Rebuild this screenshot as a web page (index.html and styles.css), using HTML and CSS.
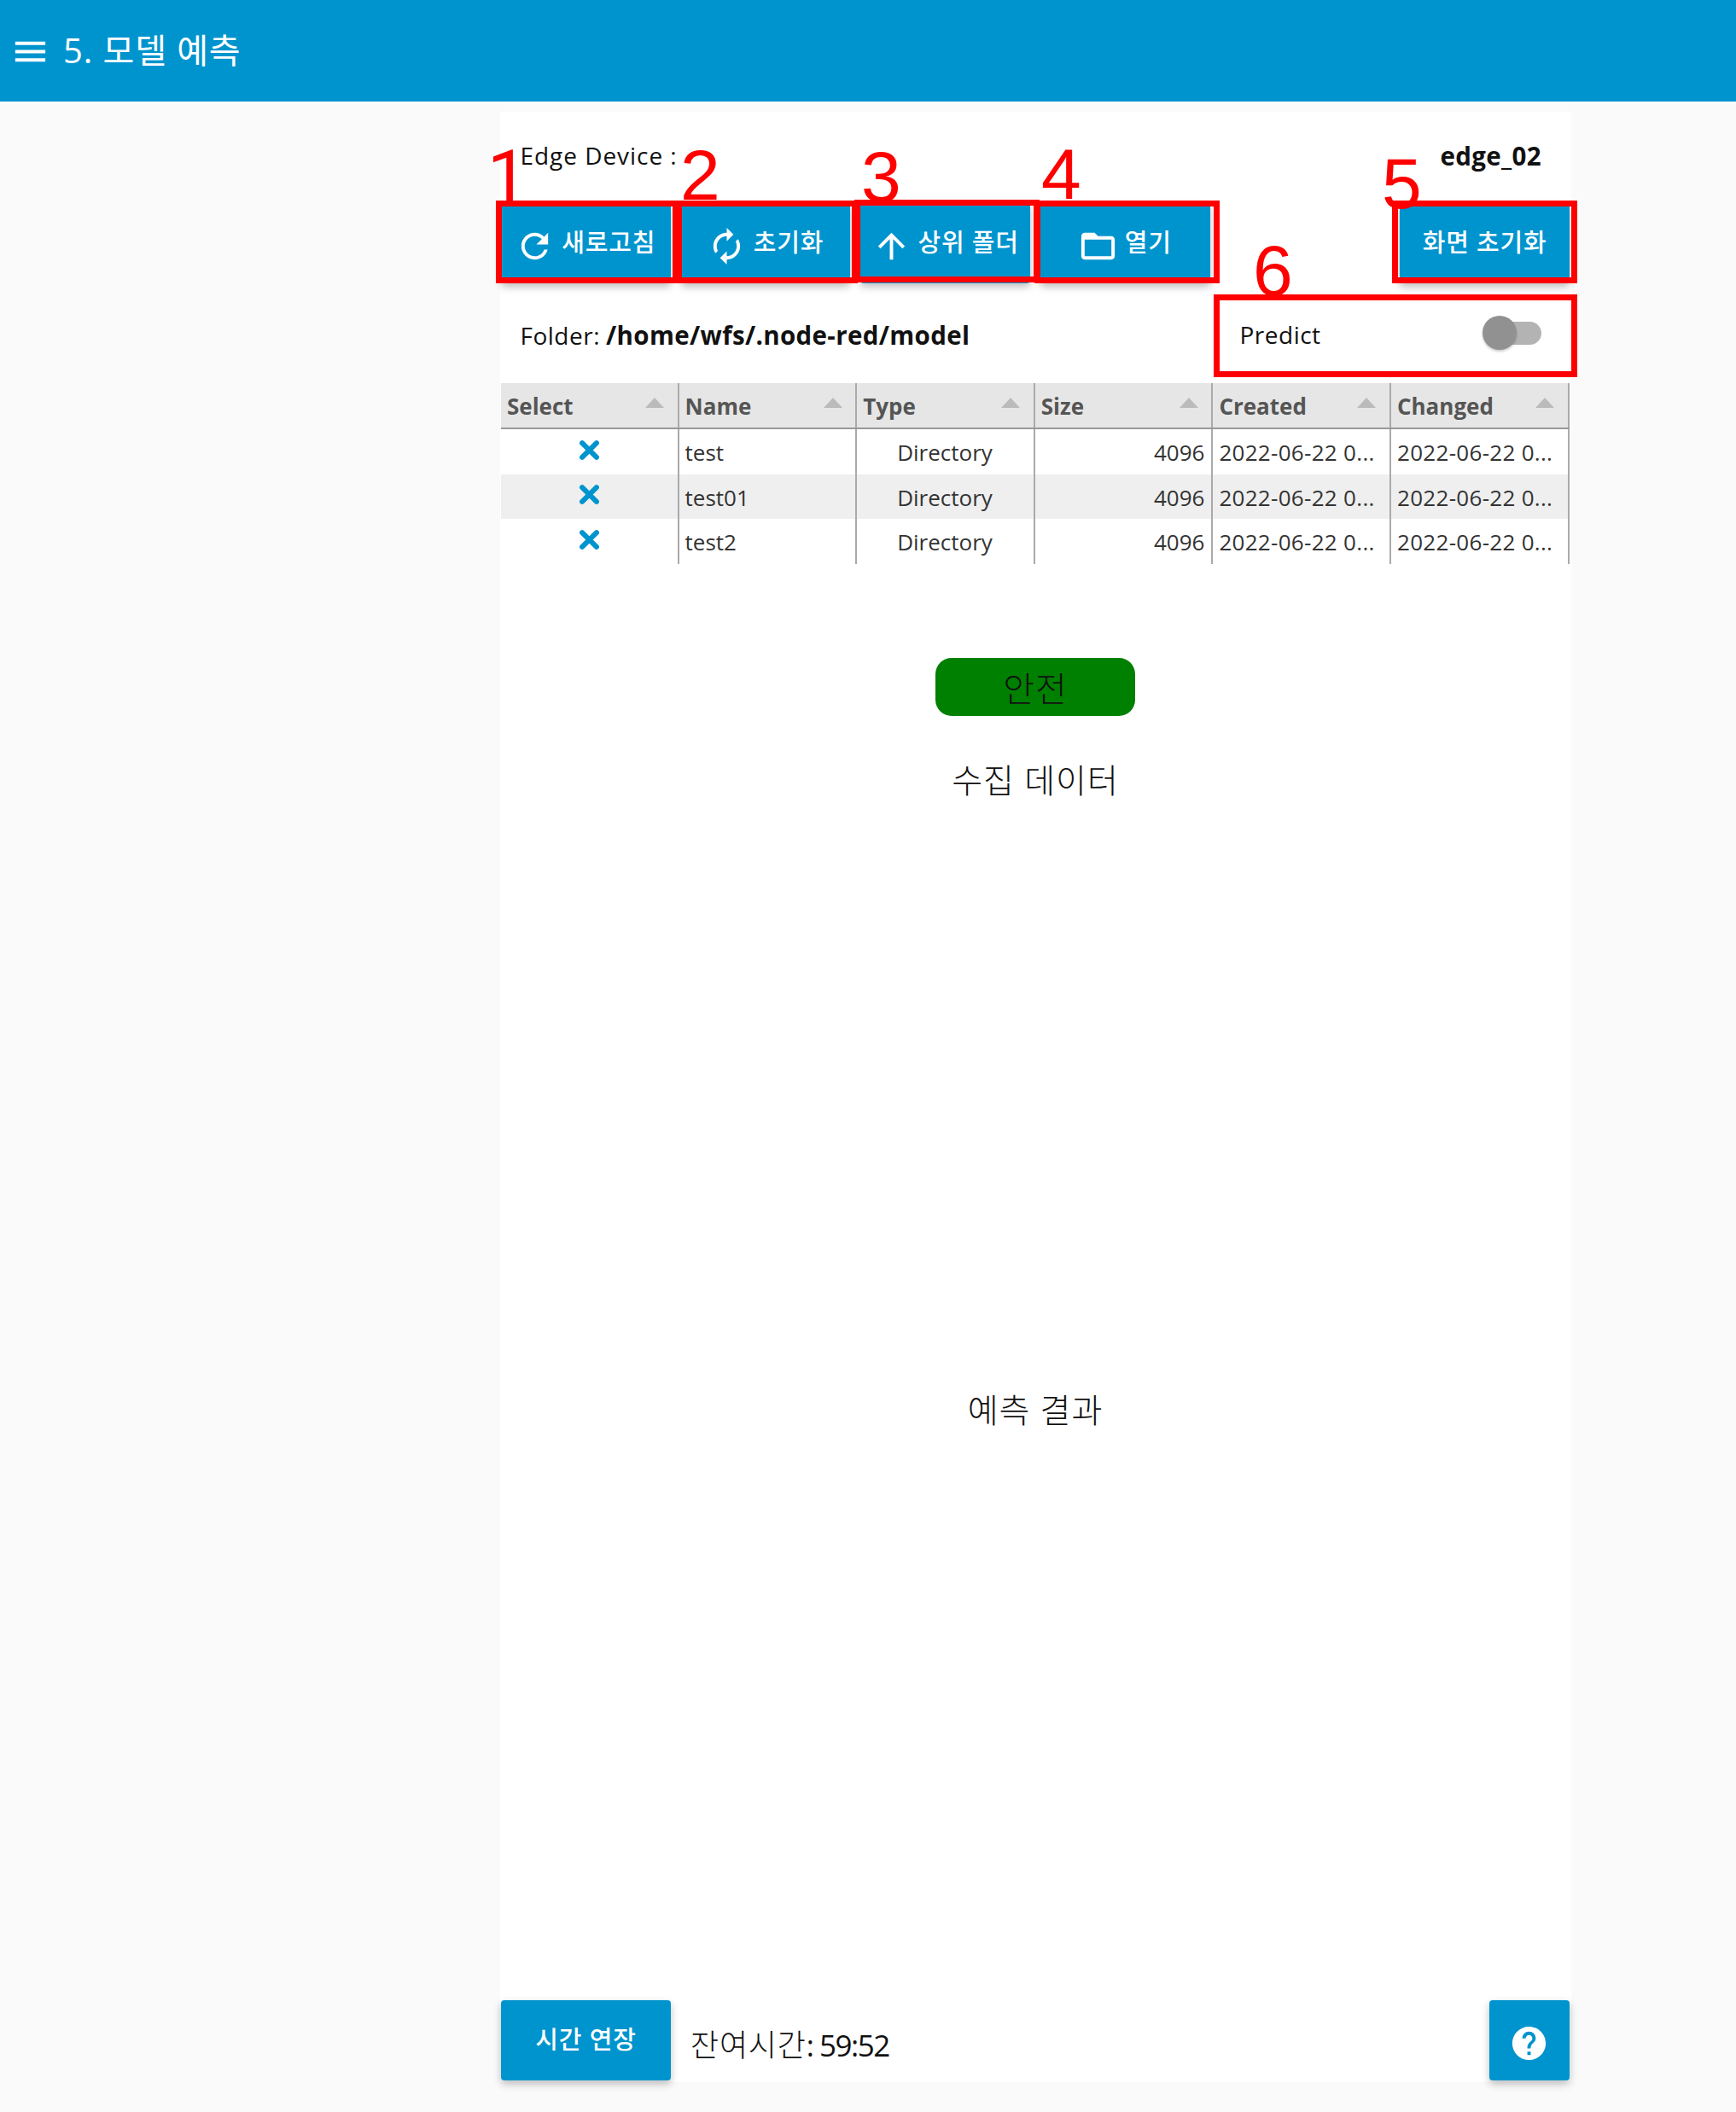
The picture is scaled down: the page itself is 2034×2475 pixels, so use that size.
FILE: index.html
```html
<!DOCTYPE html>
<html lang="ko">
<head>
<meta charset="utf-8">
<title>모델 예측</title>
<link rel="stylesheet" href="styles.css">
</head>
<body>
<header class="toolbar">
  <svg class="menu-icon" viewBox="0 0 24 24"><path d="M3 18h18v-2H3v2zm0-5h18v-2H3v2zm0-7v2h18V6H3z"/></svg>
  <h1 class="title">5. 모델 예측</h1>
</header>
<main class="panel">
  <div class="row device-row"><span class="edge">Edge Device :</span><b class="edge-name">edge_02</b></div>
  <div class="buttons">
    <button class="btn"><svg class="icon" viewBox="0 0 24 24"><path d="M17.65 6.35C16.2 4.9 14.21 4 12 4c-4.42 0-7.99 3.58-7.99 8s3.57 8 7.99 8c3.73 0 6.84-2.55 7.73-6h-2.08c-.82 2.33-3.04 4-5.65 4-3.31 0-6-2.69-6-6s2.69-6 6-6c1.66 0 3.14.69 4.22 1.78L13 11h7V4l-2.35 2.35z"/></svg><span>새로고침</span></button>
    <button class="btn"><svg class="icon" viewBox="0 0 24 24"><path d="M12 6v3l4-4-4-4v3c-4.42 0-8 3.58-8 8 0 1.57.46 3.03 1.24 4.26L6.7 14.8c-.45-.83-.7-1.79-.7-2.8 0-3.31 2.69-6 6-6zm6.76 1.74L17.3 9.2c.44.84.7 1.79.7 2.8 0 3.31-2.69 6-6 6v-3l-4 4 4 4v-3c4.42 0 8-3.58 8-8 0-1.57-.46-3.03-1.24-4.26z"/></svg><span>초기화</span></button>
    <button class="btn"><svg class="icon" viewBox="0 0 24 24"><path d="M4 12l1.41 1.41L11 7.83V20h2V7.83l5.58 5.59L20 12l-8-8-8 8z"/></svg><span>상위 폴더</span></button>
    <button class="btn"><svg class="icon" viewBox="0 0 24 24"><path d="M20 6h-8l-2-2H4c-1.1 0-1.99.9-1.99 2L2 18c0 1.1.9 2 2 2h16c1.1 0 2-.9 2-2V8c0-1.1-.9-2-2-2zm0 12H4V8h16v10z"/></svg><span>열기</span></button>
    <button class="btn reset"><span>화면 초기화</span></button>
  </div>
  <div class="row folder-row">
    <div class="folder"><span>Folder:</span><b class="path">/home/wfs/.node-red/model</b></div>
    <div class="predict"><span>Predict</span><div class="switch"><div class="thumb"></div></div></div>
  </div>
  <div class="table">
    <div class="tr head">
      <div class="td"><span>Select</span><i class="sort"></i></div>
      <div class="td"><span>Name</span><i class="sort"></i></div>
      <div class="td"><span>Type</span><i class="sort"></i></div>
      <div class="td"><span>Size</span><i class="sort"></i></div>
      <div class="td"><span>Created</span><i class="sort"></i></div>
      <div class="td"><span>Changed</span><i class="sort"></i></div>
    </div>
    <div class="tr">
      <div class="td center"><svg class="cross" viewBox="0 0 24 24"><path d="M4.5 4.5l15 15M19.5 4.5l-15 15"/></svg></div>
      <div class="td">test</div><div class="td center">Directory</div><div class="td end">4096</div>
      <div class="td date">2022-06-22 0...</div><div class="td date">2022-06-22 0...</div>
    </div>
    <div class="tr even">
      <div class="td center"><svg class="cross" viewBox="0 0 24 24"><path d="M4.5 4.5l15 15M19.5 4.5l-15 15"/></svg></div>
      <div class="td">test01</div><div class="td center">Directory</div><div class="td end">4096</div>
      <div class="td date">2022-06-22 0...</div><div class="td date">2022-06-22 0...</div>
    </div>
    <div class="tr">
      <div class="td center"><svg class="cross" viewBox="0 0 24 24"><path d="M4.5 4.5l15 15M19.5 4.5l-15 15"/></svg></div>
      <div class="td">test2</div><div class="td center">Directory</div><div class="td end">4096</div>
      <div class="td date">2022-06-22 0...</div><div class="td date">2022-06-22 0...</div>
    </div>
  </div>
  <div class="status">안전</div>
  <h2 class="heading collected">수집 데이터</h2>
  <h2 class="heading result">예측 결과</h2>
  <footer class="footer">
    <button class="btn extend"><span>시간 연장</span></button>
    <span class="remaining">잔여시간<span class="clock">: 59:52</span></span>
    <button class="btn help"><svg class="icon" viewBox="0 0 24 24"><path d="M12 2C6.48 2 2 6.48 2 12s4.48 10 10 10 10-4.48 10-10S17.52 2 12 2zm1 17h-2v-2h2v2zm2.07-7.75l-.9.92C13.45 12.9 13 13.5 13 15h-2v-.5c0-1.1.45-2.1 1.17-2.83l1.24-1.26c.37-.36.59-.86.59-1.41 0-1.1-.9-2-2-2s-2 .9-2 2H8c0-2.21 1.79-4 4-4s4 1.79 4 4c0 .88-.36 1.68-.93 2.25z"/></svg></button>
  </footer>
</main>
<div class="mark m1"></div><div class="mark m2"></div><div class="mark m3"></div><div class="mark m4"></div><div class="mark m5"></div><div class="mark m6"></div>
<span class="num n1">1</span><span class="num n2">2</span><span class="num n3">3</span><span class="num n4">4</span><span class="num n5">5</span><span class="num n6">6</span>
</body>
</html>
```
FILE: styles.css
```css
* { box-sizing: border-box; }
body {
  margin: 0;
  height: 2475px;
  position: relative;
  background: #fafafa;
  color: #111;
  font-family: "Open Sans", "Noto Sans CJK KR", sans-serif;
  font-size: 28px;
  overflow: hidden;
}
.toolbar {
  height: 121px;
  padding-left: 12px;
  display: flex;
  align-items: center;
  background: #0094ce;
  border-bottom: 2px solid #fff;
  color: #fff;
}
.menu-icon { width: 47px; height: 47px; fill: #fff; margin-top: 2px; }
.title { margin: -2px 0 0 15px; font-size: 40px; font-weight: 400; line-height: 116px; letter-spacing: .9px; }
.panel {
  width: 1255px;
  height: 2309px;
  margin: 10px 0 0 585.5px;
  padding: 0 1.5px;
  background: #fff;
  display: flex;
  flex-direction: column;
}
.row { display: flex; align-items: center; letter-spacing: .5px; }
.device-row { height: 102px; padding: 0 33px 0 22.5px; justify-content: space-between; }
.edge { letter-spacing: .95px; }
.row b { font-size: 29.5px; letter-spacing: .35px; }
.buttons { margin-top: 5px; display: grid; grid-template-columns: repeat(6, 1fr); gap: 12px; }
.btn {
  height: 94px;
  padding: 0;
  border: 0;
  border-radius: 4px;
  background: #0094ce;
  color: #fff;
  display: flex;
  align-items: center;
  justify-content: center;
  gap: 8px;
  font: 500 29px/40px "Open Sans", "Noto Sans CJK KR", sans-serif;
  letter-spacing: .8px;
  box-shadow: 0 4px 10px rgba(0, 0, 0, .26);
}
.btn span { margin-bottom: 3px; }
.icon { width: 47px; height: 47px; fill: #fff; margin: 6px 0 0 -1px; }
.reset { grid-column: 6; }
.folder-row { margin-top: 12.5px; height: 95px; }
.folder { width: 843px; padding-left: 22.5px; display: flex; align-items: baseline; gap: 7px; }
.predict { flex: 1; padding: 0 33px 0 22.5px; display: flex; align-items: center; justify-content: space-between; }
.switch { width: 66px; height: 27px; border-radius: 14px; background: #b3b3b3; margin-top: -4px; }
.thumb { width: 40px; height: 40px; margin: -6.5px 0 0 -3px; border-radius: 50%; background: #919191; box-shadow: 0 2px 3px rgba(0, 0, 0, .2); }
.table { margin-top: 9px; color: #333; font-size: 26px; }
.tr { display: grid; grid-template-columns: repeat(6, 208.6px); height: 52.6px; }
.td { display: flex; align-items: center; padding: 1.5px 8px 0 7px; border-right: 2px solid #aaa; white-space: nowrap; }
.date { letter-spacing: .3px; }
.head { height: 54.5px; background: #e6e6e6; border-bottom: 2px solid #999; color: #555; font-weight: 700; }
.head .td { justify-content: space-between; padding-right: 15.5px; }
.sort { border: 11.5px solid transparent; border-top: 0; border-bottom: 12px solid #bbb; margin-top: -8px; }
.even { background: #efefef; }
.center { justify-content: center; }
.end { justify-content: flex-end; }
.cross { width: 27px; height: 27px; margin: -6px 0 0 1px; fill: none; stroke: #0094ce; stroke-width: 5.3; stroke-linecap: round; }
.status {
  width: 234px;
  height: 68px;
  margin: 110px auto 0;
  border-radius: 19px;
  background: #008000;
  text-align: center;
  font-size: 40px;
  font-weight: 300;
  line-height: 72px;
  letter-spacing: 1px;
}
.heading { margin: 0; text-align: center; font-size: 39px; font-weight: 300; line-height: 60px; letter-spacing: 1px; }
.collected { margin-top: 45px; }
.result { margin-top: 678px; }
.footer { margin-top: auto; margin-bottom: 2px; display: flex; align-items: center; }
.extend { width: 199px; }
.remaining { margin: 6px 0 0 23px; font-size: 36px; font-weight: 300; letter-spacing: .8px; }
.clock { font-size: 35px; font-weight: 400; letter-spacing: -1.5px; }
.help { width: 94px; margin-left: auto; }
.mark { position: absolute; top: 235px; height: 97px; border: 7px solid #f00; }
.m1 { left: 581px; width: 214px; }
.m2 { left: 792px; width: 213px; }
.m3 { left: 1001px; width: 217px; top: 234px; }
.m4 { left: 1212px; width: 217px; }
.m5 { left: 1631px; width: 217px; }
.m6 { left: 1422px; width: 426px; top: 345px; }
.num { position: absolute; color: #f00; font: 84px/84px "Liberation Sans", Arial, sans-serif; }
.n1 { left: 571px; top: 165px; font-family: Roboto, sans-serif; }
.n2 { left: 797px; top: 163px; }
.n3 { left: 1009px; top: 165px; }
.n4 { left: 1220px; top: 162px; }
.n5 { left: 1619px; top: 173px; }
.n6 { left: 1468px; top: 275px; }
```
